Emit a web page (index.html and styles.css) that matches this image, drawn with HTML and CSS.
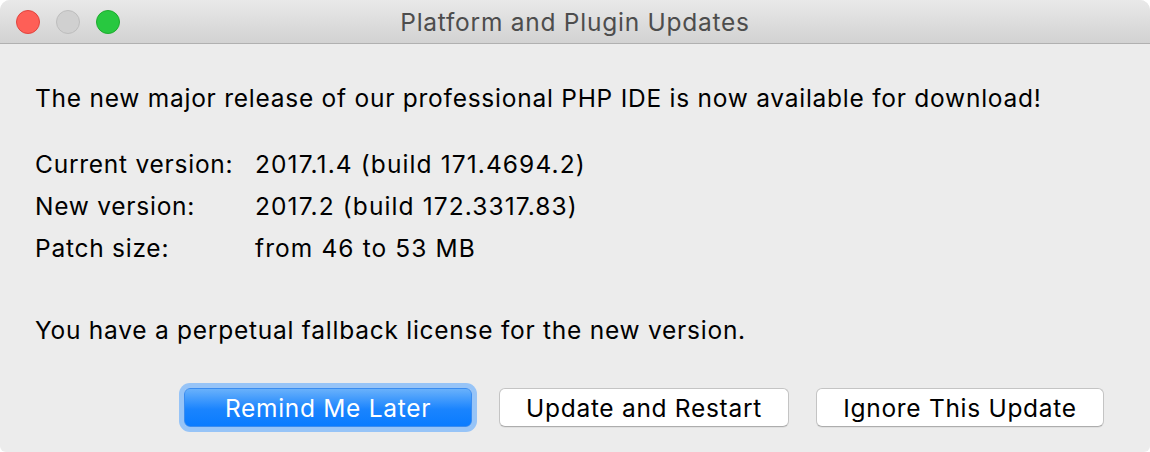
FILE: index.html
```html
<!DOCTYPE html>
<html>
<head>
<meta charset="utf-8">
<link rel="stylesheet" href="styles.css">
</head>
<body>
<div class="window">
  <div class="titlebar">
    <div class="lights">
      <span class="light red"></span>
      <span class="light gray"></span>
      <span class="light green"></span>
    </div>
    <div class="title">Platform and Plugin Updates</div>
    <div class="spacer"></div>
  </div>
  <div class="content">
    <p class="lead">The new major release of our professional PHP IDE is now available for download!</p>
    <div class="info">
      <div class="label">Current version:</div><div class="value">2017.1.4 (build 171.4694.2)</div>
      <div class="label">New version:</div><div class="value">2017.2 (build 172.3317.83)</div>
      <div class="label">Patch size:</div><div class="value">from 46 to 53 MB</div>
    </div>
    <p class="license">You have a perpetual fallback license for the new version.</p>
    <div class="buttons">
      <button class="btn primary">Remind Me Later</button>
      <button class="btn wide">Update and Restart</button>
      <button class="btn">Ignore This Update</button>
    </div>
  </div>
</div>
</body>
</html>
```
FILE: styles.css
```css
html, body {
  margin: 0;
  padding: 0;
  background: #ffffff;
}
.window {
  width: 1150px;
  height: 452px;
  background: #ececec;
  border-radius: 10px 10px 6px 6px;
  overflow: hidden;
  font-family: "Inter", "Noto Sans", sans-serif;
  color: #000;
}
.titlebar {
  height: 43px;
  border-bottom: 1px solid #b0b0b0;
  background: linear-gradient(#e9e9e9, #d2d2d2);
  display: grid;
  grid-template-columns: 1fr auto 1fr;
  align-items: center;
}
.lights {
  display: flex;
  gap: 16px;
  padding-left: 16px;
}
.light {
  width: 24px;
  height: 24px;
  border-radius: 50%;
  box-sizing: border-box;
}
.red { background: #fe5f57; border: 1px solid #e0443e; }
.gray { background: #d0d0d0; border: 1px solid #bdbdbd; }
.green { background: #28c840; border: 1px solid #1eab2e; }
.title {
  font-size: 24.5px;
  letter-spacing: 0.75px;
  color: #4d4d4d;
  padding-top: 1px;
}
.content {
  padding: 33px 46px 0 35px;
  font-size: 24.5px;
  letter-spacing: 0.75px;
}
.lead, .license {
  margin: 0;
  line-height: 42px;
}
.info {
  margin-top: 24px;
  display: grid;
  grid-template-columns: 220px auto;
  line-height: 42px;
}
.value {
  letter-spacing: 1.1px;
}
.license {
  margin-top: 40px;
}
.buttons {
  margin-top: 37px;
  display: flex;
  justify-content: flex-end;
  gap: 27px;
}
.btn {
  width: 288px;
  height: 39px;
  border-radius: 6px;
  border: 1px solid #c4c4c4;
  border-bottom-color: #adadad;
  background: #ffffff;
  font-family: inherit;
  font-size: 24.5px;
  letter-spacing: 0.7px;
  color: #000;
  padding: 0;
  box-shadow: 0 1px 0 rgba(0,0,0,0.05);
}
.btn.wide { width: 290px; }
.btn.primary {
  color: #ffffff;
  border: 1px solid #3a8cf0;
  background: linear-gradient(#69b1fb, #1a84fe 55%, #0a7cff);
  box-shadow: 0 0 0 5px #97c4f7;
}
```
